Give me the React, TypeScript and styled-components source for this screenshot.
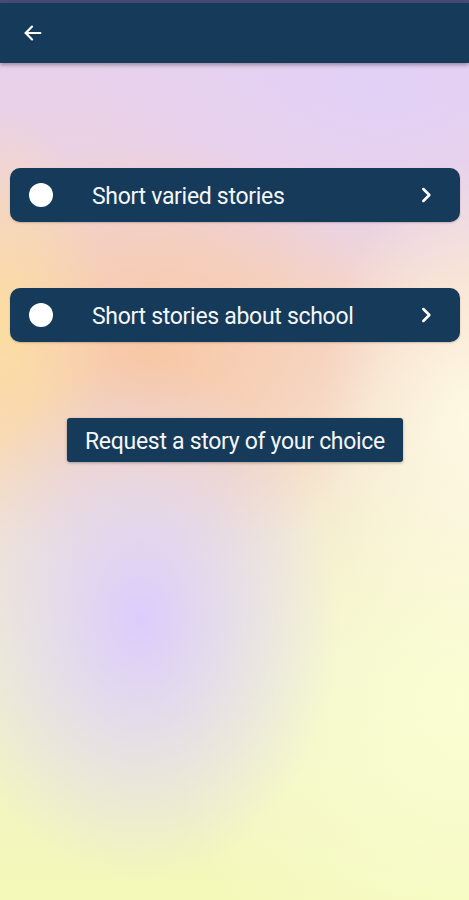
import React from 'react'
import styled, { createGlobalStyle } from 'styled-components'

const GlobalStyle = createGlobalStyle`
    html, body {
        margin: 0;
        padding: 0;
    }
    body {
        font-family: Roboto, "Noto Sans", sans-serif;
    }
`

const Screen = styled.div`
    width: 469px;
    height: 900px;
    overflow: hidden;
    display: flex;
    flex-direction: column;
    background:
        radial-gradient(ellipse 200px 260px at 140px 620px, rgba(220, 204, 252, 1) 0%, rgba(224, 214, 244, 0.7) 45%, rgba(224, 214, 244, 0) 100%),
        radial-gradient(ellipse 110px 220px at 0px 330px, rgba(253, 222, 160, 0.9) 0%, rgba(253, 222, 160, 0) 100%),
        radial-gradient(ellipse 230px 220px at 150px 360px, rgba(248, 198, 162, 0.9) 0%, rgba(248, 198, 162, 0) 100%),
        radial-gradient(ellipse 150px 260px at 469px 420px, rgba(254, 250, 228, 0.95) 0%, rgba(254, 250, 228, 0) 100%),
        radial-gradient(ellipse 300px 200px at 380px 90px, rgba(226, 208, 246, 1) 0%, rgba(226, 208, 246, 0) 100%),
        radial-gradient(ellipse 300px 360px at 460px 700px, rgba(250, 254, 210, 1) 0%, rgba(250, 254, 210, 0) 100%),
        linear-gradient(180deg, #e4d0f2 0%, #ecd2e2 18%, #f6d6c6 36%, #f4e0d2 52%, #f2f2cc 74%, #f4f8b8 100%);
`

const StatusStrip = styled.div`
    height: 3px;
    background: #4a4a7a;
`

const Header = styled.header`
    height: 60px;
    background: #163a5a;
    display: flex;
    align-items: center;
    padding-left: 20px;
    box-shadow: 0 2px 4px rgba(0, 0, 0, 0.35);
    position: relative;
    z-index: 1;
`

const BackButton = styled.button`
    background: none;
    border: none;
    padding: 0;
    width: 26px;
    height: 26px;
    display: flex;
    align-items: center;
    justify-content: center;
    color: #ffffff;
`

const Content = styled.main`
    display: flex;
    flex-direction: column;
    align-items: center;
    padding: 105px 9px 0 10px;
`

const StoryRow = styled.div`
    width: 100%;
    height: 54px;
    box-sizing: border-box;
    background: #163a5a;
    border-radius: 10px;
    display: flex;
    align-items: center;
    padding: 0 26px 0 19px;
    margin-bottom: 66px;
    box-shadow: 0 1px 2px rgba(0, 0, 0, 0.2);
    color: #ffffff;
`

const Dot = styled.span`
    width: 24px;
    height: 24px;
    border-radius: 50%;
    background: #ffffff;
    flex-shrink: 0;
`

const RowLabel = styled.span`
    flex: 1;
    margin-left: 39px;
    font-size: 23px;
    letter-spacing: -0.3px;
    color: #f4f6f8;
    padding-top: 2px;
`

const RequestButton = styled.button`
    margin-top: 10px;
    height: 44px;
    padding: 2px 18px 0;
    background: #163a5a;
    border: none;
    border-radius: 3px;
    color: #f4f6f8;
    font-family: Roboto, "Noto Sans", sans-serif;
    font-size: 23px;
    letter-spacing: -0.3px;
    box-shadow: 0 1px 3px rgba(0, 0, 0, 0.3);
`

const stories = ['Short varied stories', 'Short stories about school']

const App = () => {
    return (
        <>
            <GlobalStyle />
            <Screen>
                <StatusStrip />
                <Header>
                    <BackButton aria-label="Back">
                        <svg width="22" height="22" viewBox="0 0 24 24" fill="none" stroke="currentColor" strokeWidth="2.4" strokeLinecap="round" strokeLinejoin="round">
                            <path d="M20 12H4" />
                            <path d="M11 5l-7 7 7 7" />
                        </svg>
                    </BackButton>
                </Header>
                <Content>
                    {stories.map(story => (
                        <StoryRow key={story}>
                            <Dot />
                            <RowLabel>{story}</RowLabel>
                            <svg width="16" height="16" viewBox="0 0 24 24" fill="none" stroke="currentColor" strokeWidth="3.8" strokeLinecap="round" strokeLinejoin="round">
                                <path d="M8 3l9 9-9 9" />
                            </svg>
                        </StoryRow>
                    ))}
                    <RequestButton>Request a story of your choice</RequestButton>
                </Content>
            </Screen>
        </>
    )
}

export default App
